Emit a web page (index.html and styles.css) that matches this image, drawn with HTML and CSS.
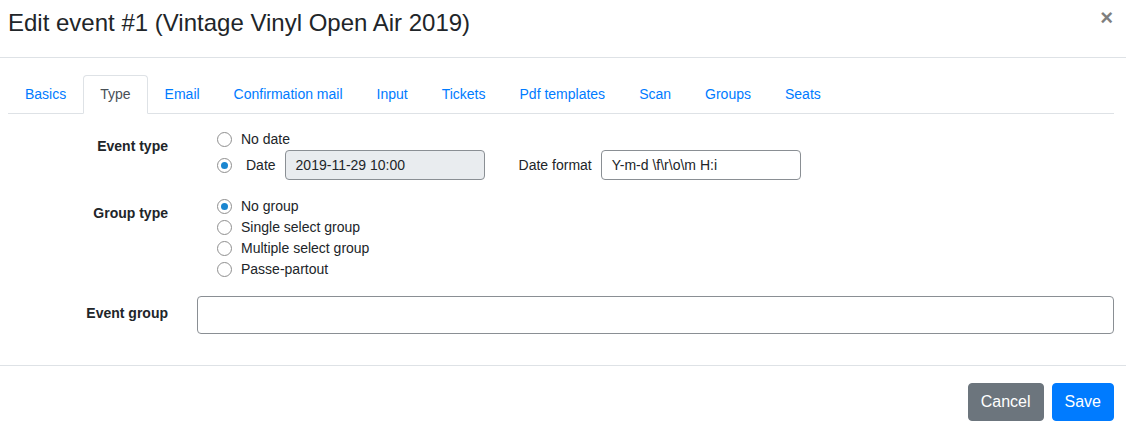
FILE: index.html
```html
<!DOCTYPE html>
<html lang="en">
<head>
<meta charset="utf-8">
<title>Edit event</title>
<link rel="stylesheet" href="styles.css">
</head>
<body>
<div class="modal">
  <div class="modal-header">
    <h5 class="modal-title">Edit event #1 (Vintage Vinyl Open Air 2019)</h5>
    <button class="close" type="button">&times;</button>
  </div>
  <div class="modal-body">
    <ul class="nav-tabs">
      <li><a class="nav-link">Basics</a></li>
      <li><a class="nav-link active">Type</a></li>
      <li><a class="nav-link">Email</a></li>
      <li><a class="nav-link">Confirmation mail</a></li>
      <li><a class="nav-link">Input</a></li>
      <li><a class="nav-link">Tickets</a></li>
      <li><a class="nav-link">Pdf templates</a></li>
      <li><a class="nav-link">Scan</a></li>
      <li><a class="nav-link">Groups</a></li>
      <li><a class="nav-link">Seats</a></li>
    </ul>
    <div class="form">
      <div class="form-row">
        <div class="col-label">Event type</div>
        <div class="col-field radios">
          <label class="check"><span class="radio"></span>No date</label>
          <div class="check date-line">
            <span class="radio on"></span><span class="date-text">Date</span>
            <span class="input sm disabled">2019-11-29 10:00</span>
            <span class="inline-label">Date format</span>
            <span class="input sm">Y-m-d \f\r\o\m H:i</span>
          </div>
        </div>
      </div>
      <div class="form-row">
        <div class="col-label">Group type</div>
        <div class="col-field radios">
          <label class="check"><span class="radio on"></span>No group</label>
          <label class="check"><span class="radio"></span>Single select group</label>
          <label class="check"><span class="radio"></span>Multiple select group</label>
          <label class="check"><span class="radio"></span>Passe-partout</label>
        </div>
      </div>
      <div class="form-row">
        <div class="col-label">Event group</div>
        <div class="col-field wide">
          <span class="input lg"></span>
        </div>
      </div>
    </div>
  </div>
  <div class="modal-footer">
    <button class="btn btn-secondary" type="button">Cancel</button>
    <button class="btn btn-primary" type="button">Save</button>
  </div>
</div>
</body>
</html>
```

FILE: styles.css
```css
* { box-sizing: border-box; }
html, body { margin: 0; padding: 0; background: #fff; }
body {
  font-family: "Liberation Sans", Arial, sans-serif;
  font-size: 14px;
  line-height: 1.5;
  color: #212529;
}
.modal { width: 1126px; }
.modal-header {
  display: flex;
  justify-content: space-between;
  align-items: flex-start;
  padding: 5px 12px 16px 8px;
  border-bottom: 1px solid #dee2e6;
}
.modal-title {
  margin: 0;
  font-size: 24px;
  font-weight: 400;
  line-height: 36px;
  color: #212529;
}
.close {
  border: 0;
  background: transparent;
  padding: 0;
  margin: 3px 1px 0 0;
  font-family: "Liberation Sans", Arial, sans-serif;
  font-size: 22px;
  font-weight: 700;
  line-height: 14px;
  color: #000;
  opacity: .5;
  height: 20px;
}
.modal-body { padding: 17px 12px 31px 8px; }
.nav-tabs {
  list-style: none;
  margin: 0;
  padding: 0;
  display: flex;
  border-bottom: 1px solid #dee2e6;
}
.nav-tabs li { margin-bottom: -1px; }
.nav-link {
  display: block;
  padding: 8px 16px;
  border: 1px solid transparent;
  border-top-left-radius: 4px;
  border-top-right-radius: 4px;
  color: #007bff;
  line-height: 21px;
}
.nav-link.active {
  color: #495057;
  background: #fff;
  border-color: #dee2e6 #dee2e6 #fff;
}
.form { padding-top: 15px; }
.form-row {
  display: flex;
  margin-bottom: 16px;
}
.form-row:last-child { margin-bottom: 0; }
.col-label {
  width: 160px;
  flex: none;
  text-align: right;
  font-weight: 700;
  padding-top: 7px;
  line-height: 21px;
}
.col-field { margin-left: 29px; }
.col-field.wide { flex: 1; }
.radios { padding-left: 20px; }
.check {
  display: flex;
  align-items: center;
  height: 21px;
  line-height: 21px;
}
.radio {
  width: 15px;
  height: 15px;
  flex: none;
  border: 1px solid #8f8f8f;
  border-radius: 50%;
  margin-right: 9px;
  margin-left: 0;
  position: relative;
  background: #fff;
}
.radio.on::after {
  content: "";
  position: absolute;
  left: 3px;
  top: 3px;
  width: 7px;
  height: 7px;
  border-radius: 50%;
  background: #1a86d0;
}
.date-line { height: 30px; }
.date-text { margin-left: 5px; margin-right: 9px; }
.input {
  display: inline-block;
  border: 1px solid #8a8f94;
  border-radius: 4px;
  background: #fff;
  color: #495057;
  font-size: 14px;
}
.input.sm {
  width: 200px;
  height: 30px;
  line-height: 28px;
  padding: 0 10px;
  color: #212529;
}
.input.disabled { background: #e9ecef; }
.inline-label { margin-left: 34px; margin-right: 9px; }
.input.lg {
  display: block;
  width: 100%;
  height: 38px;
}
.modal-footer {
  display: flex;
  justify-content: flex-end;
  gap: 8px;
  padding: 17px 12px 16px;
  border-top: 1px solid #dee2e6;
}
.btn {
  font-family: "Liberation Sans", Arial, sans-serif;
  font-size: 16px;
  line-height: 24px;
  padding: 6px 12px;
  border: 1px solid transparent;
  border-radius: 4px;
  color: #fff;
}
.btn-secondary { background: #6c757d; border-color: #6c757d; }
.btn-primary { background: #007bff; border-color: #007bff; }
```
